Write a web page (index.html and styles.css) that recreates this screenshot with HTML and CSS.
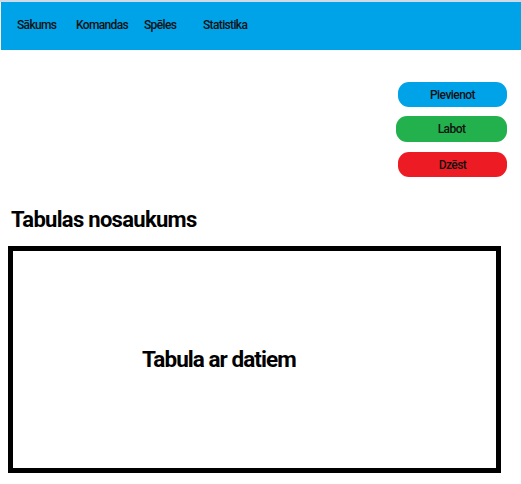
FILE: index.html
```html
<!DOCTYPE html>
<html lang="lv">
<head>
<meta charset="utf-8">
<link rel="stylesheet" href="styles.css">
</head>
<body>
<div class="topline"></div>
<nav class="nav">
  <a class="nav-item n1">Sākums</a>
  <a class="nav-item n2">Komandas</a>
  <a class="nav-item n3">Spēles</a>
  <a class="nav-item n4">Statistika</a>
</nav>
<div class="actions">
  <button class="btn btn-add">Pievienot</button>
  <button class="btn btn-edit">Labot</button>
  <button class="btn btn-del">Dzēst</button>
</div>
<h1 class="title">Tabulas nosaukums</h1>
<div class="table-box">
  <span class="table-text">Tabula ar datiem</span>
</div>
</body>
</html>
```
FILE: styles.css
```css
html, body {
  margin: 0;
  padding: 0;
  background: #fff;
}
body {
  width: 521px;
  height: 484px;
  overflow: hidden;
  font-family: Roboto, "DejaVu Sans Condensed", sans-serif;
  color: #000;
}
.topline {
  height: 2px;
  background: #cfdae6;
}
.nav {
  height: 48px;
  margin-left: 1px;
  background: #00a2e8;
  display: flex;
  align-items: center;
  font-size: 12px;
  font-weight: 500;
  letter-spacing: -0.65px;
  padding: 0 0 3px 16px;
  box-sizing: border-box;
}
.nav-item {
  color: #111;
  text-decoration: none;
}
.n1 { width: 59px; }
.n2 { width: 68px; }
.n3 { width: 59px; }
.actions {
  display: flex;
  flex-direction: column;
  align-items: flex-end;
  padding: 32px 14px 0 0;
  height: 127px;
  box-sizing: border-box;
}
.btn {
  border: none;
  font-family: inherit;
  font-size: 12px;
  font-weight: 500;
  letter-spacing: -0.55px;
  color: #111;
  height: 25px;
  border-radius: 11px;
  padding: 0;
  display: flex;
  align-items: center;
  justify-content: center;
}
.btn-add { background: #00a2e8; width: 109px; }
.btn-edit { background: #22b14c; width: 111px; margin-top: 9px; height: 26px; }
.btn-del { background: #ed1c24; width: 109px; margin-top: 10px; }
.title {
  margin: 29px 0 12px 11px;
  font-size: 22px;
  font-weight: bold;
  letter-spacing: -0.7px;
  line-height: 28px;
}
.table-box {
  margin-left: 8px;
  width: 493px;
  height: 227px;
  box-sizing: border-box;
  border: 5px solid #000;
  padding: 94px 0 0 129px;
}
.table-text {
  display: block;
  font-size: 22.5px;
  font-weight: bold;
  letter-spacing: -0.95px;
  line-height: 28px;
}
```
